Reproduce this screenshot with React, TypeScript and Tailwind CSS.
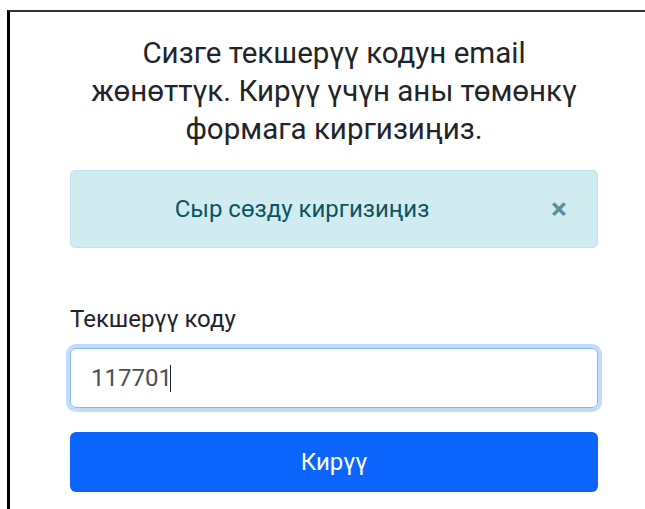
import React, { useState } from 'react';

function App() {
  const [code, setCode] = useState('117701');
  const [showAlert, setShowAlert] = useState(true);

  return (
    <div className="min-h-screen bg-white pt-[10px] pl-[7px]" style={{ fontFamily: 'Roboto, "Noto Sans", sans-serif' }}>
      <div className="min-h-[499px] border-t-2 border-l-[3px] border-t-[#333] border-l-black">
        <div className="ml-[60px] w-[528px] pt-[22px]">
          <h2 className="text-center text-[29.5px] leading-[38px] text-[#212529]">
            Сизге текшерүү кодун email жөнөттүк. Кирүү үчүн аны төмөнкү формага киргизиңиз.
          </h2>

          {showAlert && (
            <div className="relative mt-[22px] flex h-[78px] items-center rounded-[5px] border border-[#bee5eb] bg-[#d1ecf1] pl-[20px] pr-[84px]">
              <span className="flex-1 text-center text-[24px] text-[#0c5460]">Сыр сөзду киргизиңиз</span>
              <button
                onClick={() => setShowAlert(false)}
                className="absolute right-[30px] top-1/2 -translate-y-1/2 text-[30px] leading-none font-bold text-[#0c5460] opacity-60"
              >
                ×
              </button>
            </div>
          )}

          <label className="mt-[56px] block text-[24px] leading-[30px] text-[#212529]">Текшерүү коду</label>
          <div className="relative mt-[14px] rounded-[6px] shadow-[0_0_0_4px_rgba(13,110,253,0.25)]">
            <input
              value={code}
              onChange={(e) => setCode(e.target.value)}
              className="block h-[60px] w-full rounded-[6px] border border-[#86b7fe] bg-white px-[20px] text-[24px] text-[#495057] outline-none"
            />
            {/* text cursor after the typed code */}
            <span className="pointer-events-none absolute left-[100px] top-[17px] h-[27px] w-px bg-[#212529]" />
          </div>
          <button className="mt-[24px] flex h-[60px] w-full items-center justify-center rounded-[6px] bg-[#0b65fd] text-[24px] text-white">
            Кирүү
          </button>
        </div>
      </div>
    </div>
  );
}

export default App;
